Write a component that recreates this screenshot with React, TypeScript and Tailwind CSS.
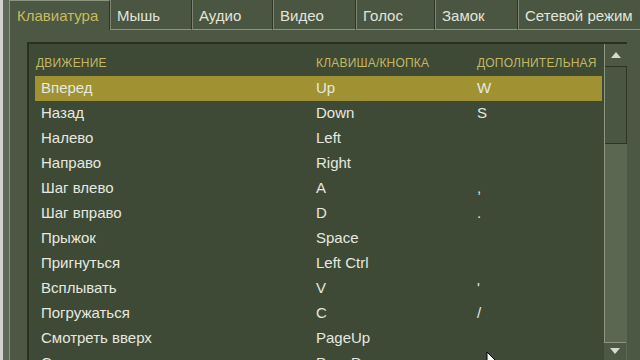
import React from 'react';

const tabs = ['Клавиатура', 'Мышь', 'Аудио', 'Видео', 'Голос', 'Замок', 'Сетевой режим'];
const tabWidths = [101, 82, 81, 83, 79, 83, 130];

const rows: [string, string, string][] = [
  ['Вперед', 'Up', 'W'],
  ['Назад', 'Down', 'S'],
  ['Налево', 'Left', ''],
  ['Направо', 'Right', ''],
  ['Шаг влево', 'A', ','],
  ['Шаг вправо', 'D', '.'],
  ['Прыжок', 'Space', ''],
  ['Пригнуться', 'Left Ctrl', ''],
  ['Всплывать', 'V', "'"],
  ['Погружаться', 'C', '/'],
  ['Смотреть вверх', 'PageUp', ''],
  ['Смотреть вниз', 'PageDown', ''],
];

export default function App() {
  return (
    <div
      className="w-[640px] h-[360px] overflow-hidden flex bg-[#4c5844] relative"
      style={{ fontFamily: '"Liberation Sans", Arial, sans-serif' }}
    >
      {/* Outer frame */}
      <div className="w-[3px] shrink-0 bg-[#d2d3cf]" />
      <div className="w-[6px] shrink-0 bg-[#5e6955]" />
      <div className="flex-1 min-w-0 flex flex-col">
        {/* Tabs */}
        <div className="flex h-[30px] shrink-0 overflow-hidden">
          {tabs.map((t, i) => (
            <div
              key={t}
              style={{ width: tabWidths[i] }}
              className={
                i === 0
                  ? 'shrink-0 border-l border-t border-[#8a9480] border-r border-r-[#2e3628] bg-[#4c5844] text-[#c9bb5c] pl-[7px] pt-[4px] text-[15px]'
                  : 'shrink-0 border-l border-[#7b8571] border-r border-r-[#2e3628] border-b border-b-[#8a9480] bg-[#4a5641] text-[#e2e4dc] pl-[6px] pt-[5px] text-[15px] whitespace-nowrap'
              }
            >
              {t}
            </div>
          ))}
        </div>
        {/* Panel body */}
        <div className="flex-1 flex border-l border-[#8a9480] pl-[17px] pt-[12px] pr-[13px]">
          <div className="flex-1 flex border-t-2 border-l-2 border-[#283020] bg-[#3e4a35]">
            <div className="flex-1 flex flex-col pl-[6px] pr-[2px]">
              {/* Header */}
              <div className="h-[32px] shrink-0 flex items-end pb-[4px] text-[12px] text-[#c4b762] uppercase tracking-[0.2px] whitespace-nowrap">
                <div className="w-[281px] pl-[1px]">Движение</div>
                <div className="w-[161px]">Клавиша/кнопка</div>
                <div>Дополнительная</div>
              </div>
              {rows.map(([a, b, c], i) => (
                <div
                  key={a}
                  className={
                    'h-[25px] shrink-0 flex items-center text-[15px] text-[#e6e8e0] ' +
                    (i === 0 ? 'bg-[#a09232]' : '')
                  }
                >
                  <div className="w-[281px] pl-[6px]">{a}</div>
                  <div className="w-[161px]">{b}</div>
                  <div>{c}</div>
                </div>
              ))}
            </div>
            {/* Scrollbar */}
            <div className="w-[23px] shrink-0 flex flex-col bg-[#5b6751] border-l border-[#8d977f]">
              <div className="h-[23px] flex items-center justify-center bg-[#4c5844] border-b border-[#2c3426]">
                <svg width="12" height="8" viewBox="0 0 12 8">
                  <path d="M1 7 L6 1 L11 7 Z" fill="#d6d9cf" />
                </svg>
              </div>
              <div className="h-[77px] bg-[#4a5641] border-r border-b border-[#2c3426]" />
              <div className="flex-1" />
            </div>
          </div>
        </div>
      </div>
      {/* Down arrow button of scrollbar */}
      <div className="absolute left-[604px] top-[342px] w-[22px] h-[20px] bg-[#4c5844] border-t border-[#8d977f] flex justify-center pt-[4px]">
        <svg width="12" height="8" viewBox="0 0 12 8">
          <path d="M1 1 L6 7 L11 1 Z" fill="#d6d9cf" />
        </svg>
      </div>
      {/* Mouse cursor */}
      <svg className="absolute left-[486px] top-[351px]" width="14" height="22" viewBox="0 0 14 22">
        <path d="M1 1 L1 17 L5 13 L8 20 L10 19 L7 12 L12 12 Z" fill="#fff" stroke="#000" strokeWidth="1" />
      </svg>
    </div>
  );
}
